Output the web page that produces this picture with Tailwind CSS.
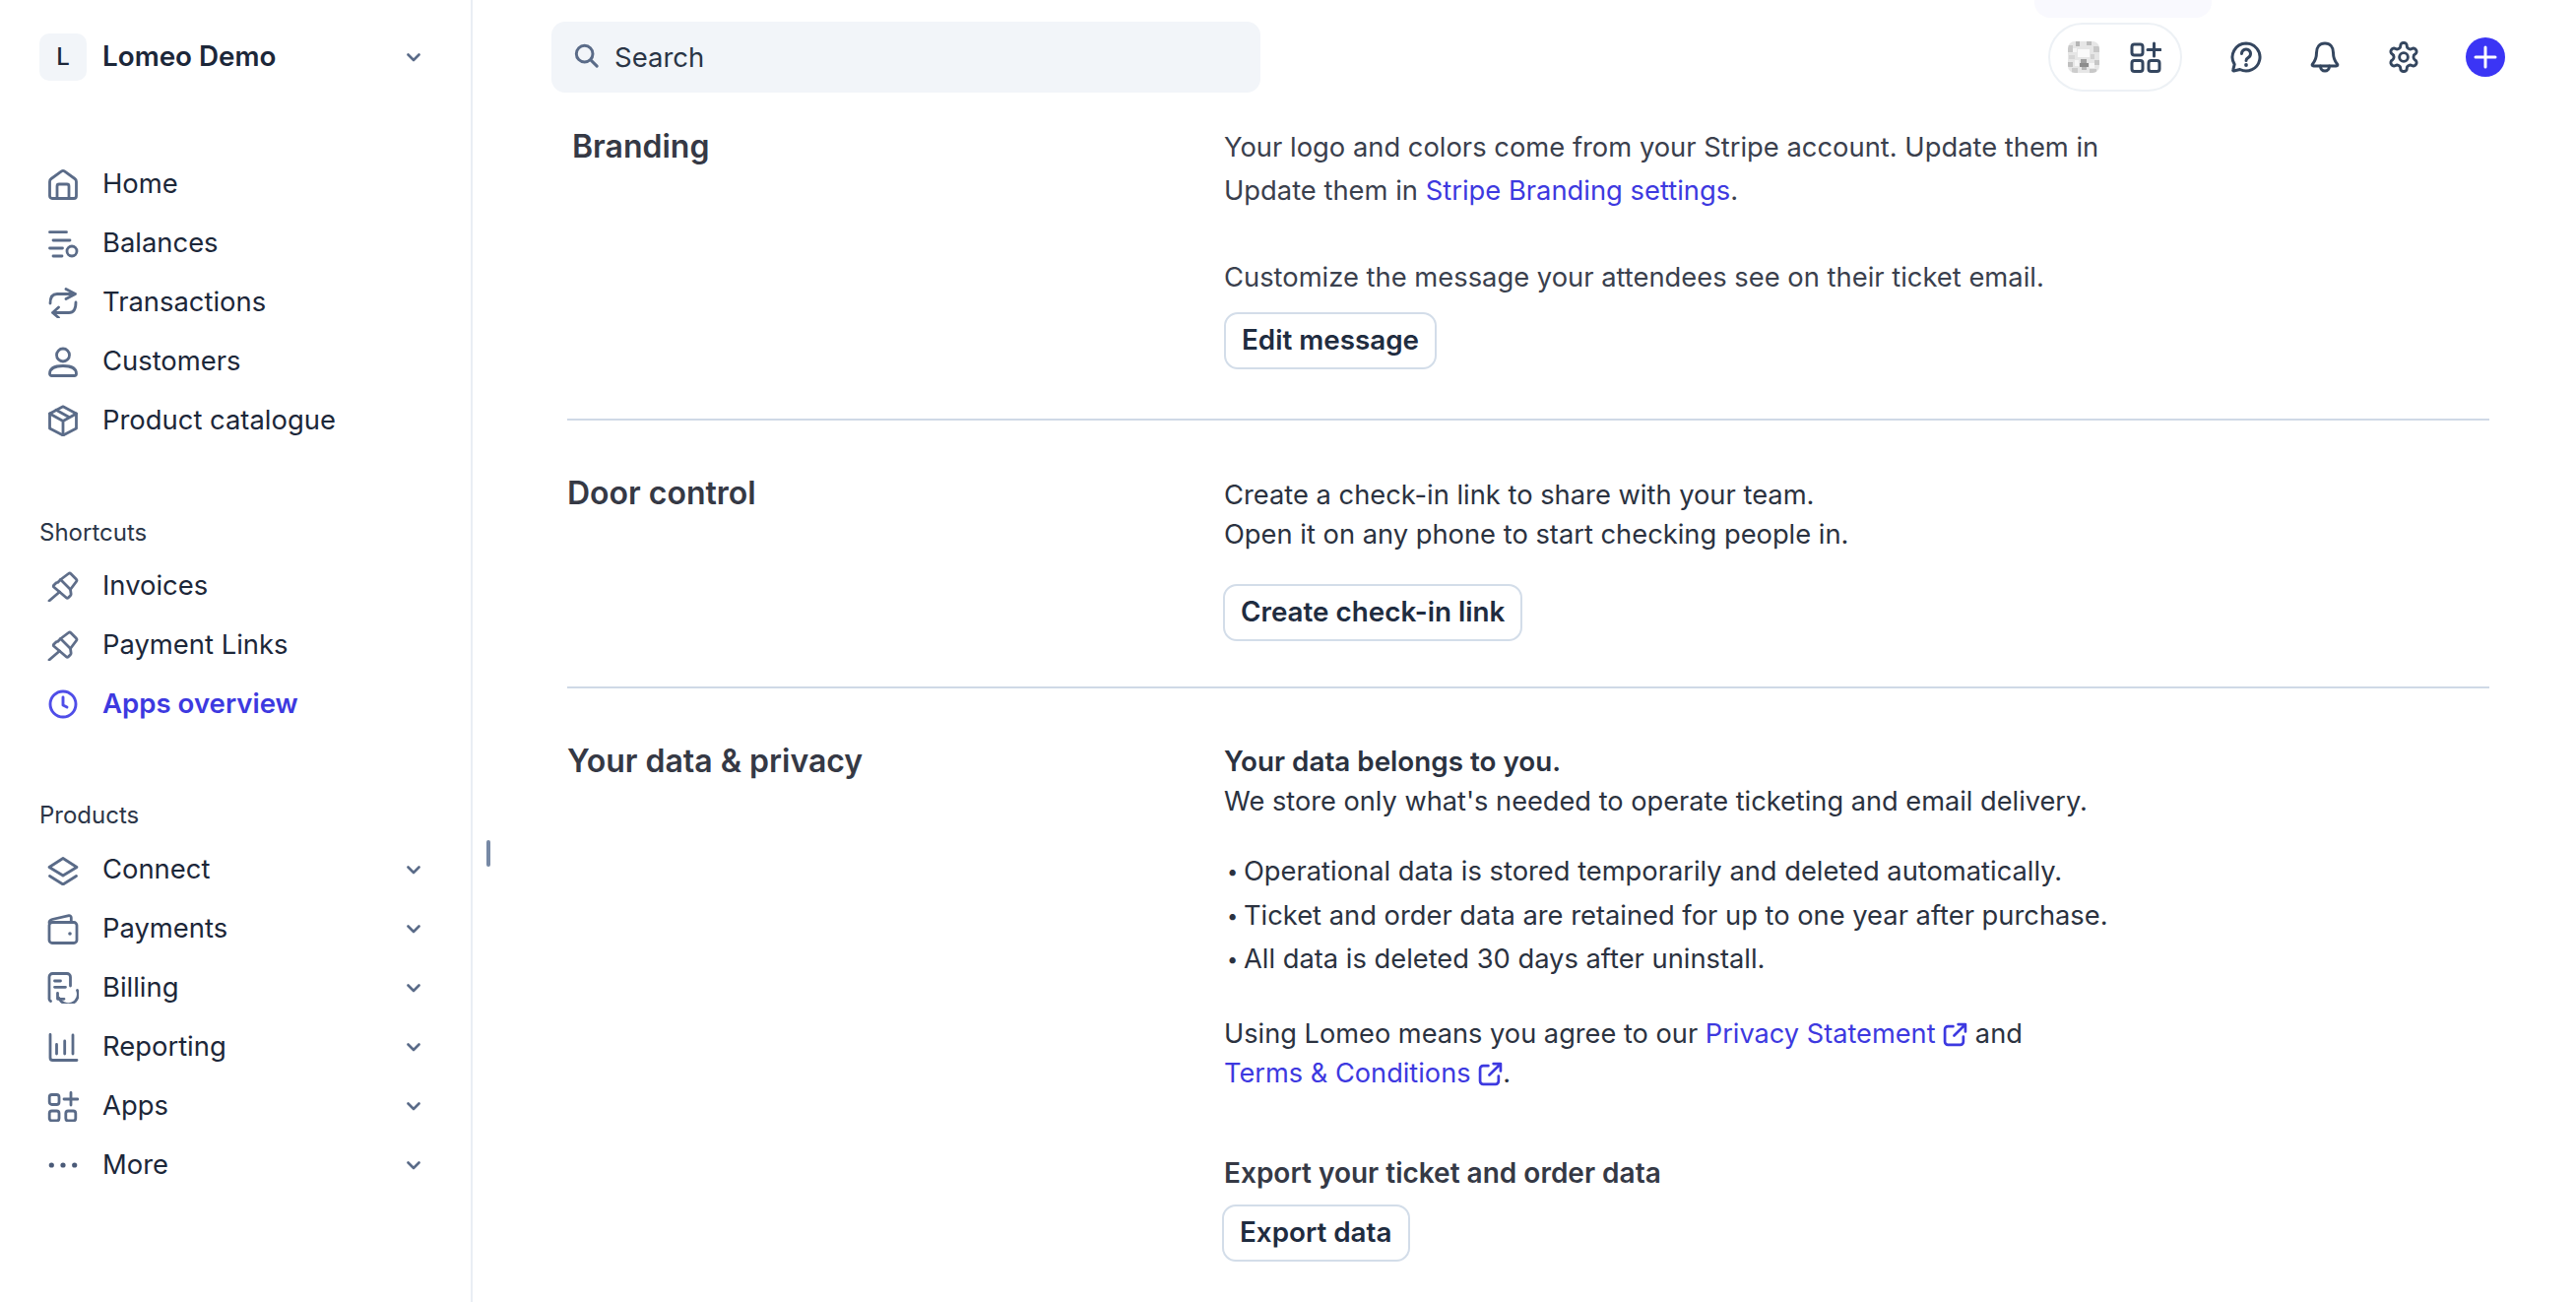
<!DOCTYPE html>
<html lang="en">
<head>
    <meta charset="UTF-8">
    <meta name="viewport" content="width=device-width, initial-scale=1.0">
    <title>Lomeo Demo - Apps overview</title>
    <script src="https://cdn.jsdelivr.net/npm/@tailwindcss/browser@4"></script>
</head>
<body class="bg-white font-['Inter',sans-serif] text-[#1c2739] h-screen overflow-hidden">

<div class="flex h-screen relative">

    <!-- Sidebar -->
    <aside class="w-[480px] shrink-0 border-r-2 border-[#e9eef4] pt-[34px] text-[27.4px]">
        <div class="flex items-center pl-[40px] pr-[51px] h-[48px]">
            <div class="w-[48px] h-[48px] rounded-[10px] bg-[#f2f5f9] flex items-center justify-center text-[24px] font-medium">L</div>
            <span class="ml-[16px] text-[27.8px] font-semibold flex-1">Lomeo Demo</span>
            <svg class="w-[14px] h-[9px] text-[#5a6b88]" viewBox="0 0 14 9" fill="none" stroke="currentColor" stroke-width="2.6" stroke-linecap="round" stroke-linejoin="round"><path d="M1.500 1.500 7 7l5.500-5.500"/></svg>
        </div>

        <!-- Main nav -->
        <nav class="mt-[75px] text-[#5a6b88]">
            <a class="flex items-center h-[60px] pl-[48px] gap-[24px]">
                <svg class="w-[32px] h-[32px]" viewBox="0 0 32 32" fill="none" stroke="currentColor" stroke-width="2.8" stroke-linejoin="round" stroke-linecap="round"><path d="M2.500 13.500c0-1.200.5-2.300 1.500-3L14.500 2.900a2.500 2.500 0 0 1 3 0L28 10.500c1 .7 1.500 1.800 1.500 3V28a2.500 2.500 0 0 1-2.500 2.500H5A2.500 2.500 0 0 1 2.500 28Z"/><path d="M10 30V18a2 2 0 0 1 2-2h8a2 2 0 0 1 2 2v12"/></svg>
                <span class="text-[#1c2739]">Home</span>
            </a>
            <a class="flex items-center h-[60px] pl-[48px] gap-[24px]">
                <svg class="w-[32px] h-[32px]" viewBox="0 0 32 32" fill="none" stroke="currentColor" stroke-width="2.8" stroke-linecap="round"><path d="M2.500 4.700h17M6 13h17M2.500 21h13M6 29h9"/><circle cx="25" cy="24" r="5"/></svg>
                <span class="text-[#1c2739]">Balances</span>
            </a>
            <a class="flex items-center h-[60px] pl-[48px] gap-[24px]">
                <svg class="w-[32px] h-[32px]" viewBox="0 0 32 32" fill="none" stroke="currentColor" stroke-width="2.8" stroke-linecap="round" stroke-linejoin="round"><path d="M3 17c0-6 2-9.500 7-9.500h18.500M19 2.500l9.500 5-9.500 5M29 16c0 7-2 10.500-7 10.500H5.500M11.500 21l-6 5.500 6 5"/></svg>
                <span class="text-[#1c2739]">Transactions</span>
            </a>
            <a class="flex items-center h-[60px] pl-[48px] gap-[24px]">
                <svg class="w-[32px] h-[32px]" viewBox="0 0 32 32" fill="none" stroke="currentColor" stroke-width="2.8" stroke-linejoin="round"><circle cx="16" cy="9.500" r="6.500"/><path d="M2.500 28.500C2.500 23 8 20.500 16 20.500S29.500 23 29.500 28.500a2 2 0 0 1-2 2h-23a2 2 0 0 1-2-2Z"/></svg>
                <span class="text-[#1c2739]">Customers</span>
            </a>
            <a class="flex items-center h-[60px] pl-[48px] gap-[24px]">
                <svg class="w-[32px] h-[32px]" viewBox="0 0 32 32" fill="none" stroke="currentColor" stroke-width="2.8" stroke-linejoin="round" stroke-linecap="round"><path d="M16 1.800 29.500 9v15L16 31 2.500 24V9Z"/><path d="M2.500 9 16 16.500 29.500 9M16 16.500V31M9 5.200l13.500 7.600"/></svg>
                <span class="text-[#1c2739]">Product catalogue</span>
            </a>
        </nav>

        <!-- Shortcuts -->
        <div class="mt-[66px] pl-[40px] text-[24px] leading-[36px] text-[#2b3648]">Shortcuts</div>
        <nav class="mt-[6px] text-[#5f6e8a]">
            <a class="flex items-center h-[60px] pl-[48px] gap-[24px]">
                <svg class="w-[32px] h-[32px]" viewBox="0 0 32 32" fill="none" stroke="currentColor" stroke-width="2.8" stroke-linejoin="round" stroke-linecap="round"><path d="M13.500 9.500 21.500 3.500a2 2 0 0 1 2.600.2l5.200 5.200a2 2 0 0 1 .2 2.600l-6 8 .6 4.500a2 2 0 0 1-.6 1.700l-2.300 2.300a1.200 1.200 0 0 1-1.700 0L6.600 17a1.200 1.200 0 0 1 0-1.700l2.300-2.300a2 2 0 0 1 1.700-.6Z"/><path d="M13.500 9.500 23.500 19.500M12.500 22 2 31"/></svg>
                <span class="text-[#1c2739]">Invoices</span>
            </a>
            <a class="flex items-center h-[60px] pl-[48px] gap-[24px]">
                <svg class="w-[32px] h-[32px]" viewBox="0 0 32 32" fill="none" stroke="currentColor" stroke-width="2.8" stroke-linejoin="round" stroke-linecap="round"><path d="M13.500 9.500 21.500 3.500a2 2 0 0 1 2.600.2l5.200 5.200a2 2 0 0 1 .2 2.600l-6 8 .6 4.500a2 2 0 0 1-.6 1.700l-2.300 2.300a1.200 1.200 0 0 1-1.700 0L6.600 17a1.200 1.200 0 0 1 0-1.700l2.300-2.300a2 2 0 0 1 1.700-.6Z"/><path d="M13.500 9.500 23.500 19.500M12.500 22 2 31"/></svg>
                <span class="text-[#1c2739]">Payment Links</span>
            </a>
            <a class="flex items-center h-[60px] pl-[48px] gap-[24px]">
                <svg class="w-[32px] h-[32px] text-[#4f4de8]" viewBox="0 0 32 32" fill="none" stroke="currentColor" stroke-width="2.9" stroke-linecap="round" stroke-linejoin="round"><circle cx="16" cy="16" r="13"/><path d="M16 9v8l4 2"/></svg>
                <span class="text-[#3d39e0] text-[27.6px] font-semibold">Apps overview</span>
            </a>
        </nav>

        <!-- Products -->
        <div class="mt-[65px] pl-[40px] text-[24px] leading-[36px] text-[#2b3648]">Products</div>
        <nav class="mt-[7px] text-[#5a6b88]">
            <a class="flex items-center h-[60px] pl-[48px] pr-[51px] gap-[24px]">
                <svg class="w-[32px] h-[32px]" viewBox="0 0 32 32" fill="none" stroke="currentColor" stroke-width="2.8" stroke-linejoin="round" stroke-linecap="round"><path d="M16 4.500 30 13.500 16 22 2 13.500Z"/><path d="M2.500 22.500 16 31l13.500-8.500"/></svg>
                <span class="text-[#1c2739] flex-1">Connect</span>
                <svg class="w-[14px] h-[9px]" viewBox="0 0 14 9" fill="none" stroke="currentColor" stroke-width="2.6" stroke-linecap="round" stroke-linejoin="round"><path d="M1.500 1.500 7 7l5.500-5.500"/></svg>
            </a>
            <a class="flex items-center h-[60px] pl-[48px] pr-[51px] gap-[24px]">
                <svg class="w-[32px] h-[32px]" viewBox="0 0 32 32" fill="none" stroke="currentColor" stroke-width="2.8" stroke-linejoin="round" stroke-linecap="round"><rect x="2" y="9.500" width="28" height="21" rx="3"/><path d="M2 10c0-2 1-3 3-3.500L22 2.700c1-.2 2.300.5 2.300 2v4.800"/><circle cx="23" cy="21" r="1.800" fill="currentColor" stroke="none"/></svg>
                <span class="text-[#1c2739] flex-1">Payments</span>
                <svg class="w-[14px] h-[9px]" viewBox="0 0 14 9" fill="none" stroke="currentColor" stroke-width="2.6" stroke-linecap="round" stroke-linejoin="round"><path d="M1.500 1.500 7 7l5.500-5.500"/></svg>
            </a>
            <a class="flex items-center h-[60px] pl-[48px] pr-[51px] gap-[24px]">
                <svg class="w-[32px] h-[32px]" viewBox="0 0 32 32" fill="none" stroke="currentColor" stroke-width="2.8" stroke-linejoin="round" stroke-linecap="round"><path d="M3.500 29.500C2.500 29 2 28.500 2 27.500V5a3.500 3.500 0 0 1 3.500-3.500H20A3.500 3.500 0 0 1 23.500 5v9"/><path d="M7.500 9h6M7.500 15.300h11"/><path d="M30.500 18.500a9.700 9.700 0 0 1-18.500 8"/><path d="M10.500 21.300v6h6.500"/></svg>
                <span class="text-[#1c2739] flex-1">Billing</span>
                <svg class="w-[14px] h-[9px]" viewBox="0 0 14 9" fill="none" stroke="currentColor" stroke-width="2.6" stroke-linecap="round" stroke-linejoin="round"><path d="M1.500 1.500 7 7l5.500-5.500"/></svg>
            </a>
            <a class="flex items-center h-[60px] pl-[48px] pr-[51px] gap-[24px]">
                <svg class="w-[32px] h-[32px]" viewBox="0 0 32 32" fill="none" stroke="currentColor" stroke-width="2.8" stroke-linejoin="round" stroke-linecap="round"><path d="M3 3.500V27a2.500 2.500 0 0 0 2.500 2.500H30"/><path d="M9.500 13.500V23M17.700 10v13M26 4v19"/></svg>
                <span class="text-[#1c2739] flex-1">Reporting</span>
                <svg class="w-[14px] h-[9px]" viewBox="0 0 14 9" fill="none" stroke="currentColor" stroke-width="2.6" stroke-linecap="round" stroke-linejoin="round"><path d="M1.500 1.500 7 7l5.500-5.500"/></svg>
            </a>
            <a class="flex items-center h-[60px] pl-[48px] pr-[51px] gap-[24px]">
                <svg class="w-[32px] h-[32px]" viewBox="0 0 32 32" fill="none" stroke="currentColor" stroke-width="2.8" stroke-linejoin="round" stroke-linecap="round"><rect x="2.200" y="4.500" width="9.800" height="10" rx="2.500"/><rect x="2.200" y="21" width="9.800" height="10" rx="2.500"/><rect x="18.800" y="21" width="10" height="10" rx="2.500"/><path d="M17 9h14M24 2.500v12.500"/></svg>
                <span class="text-[#1c2739] flex-1">Apps</span>
                <svg class="w-[14px] h-[9px]" viewBox="0 0 14 9" fill="none" stroke="currentColor" stroke-width="2.6" stroke-linecap="round" stroke-linejoin="round"><path d="M1.500 1.500 7 7l5.500-5.500"/></svg>
            </a>
            <a class="flex items-center h-[60px] pl-[48px] pr-[51px] gap-[24px]">
                <svg class="w-[32px] h-[32px] text-[#4a5a78]" viewBox="0 0 32 32" fill="currentColor"><circle cx="4.300" cy="16" r="2.600"/><circle cx="16" cy="16" r="2.600"/><circle cx="27.700" cy="16" r="2.600"/></svg>
                <span class="text-[#1c2739] flex-1">More</span>
                <svg class="w-[14px] h-[9px]" viewBox="0 0 14 9" fill="none" stroke="currentColor" stroke-width="2.6" stroke-linecap="round" stroke-linejoin="round"><path d="M1.500 1.500 7 7l5.500-5.500"/></svg>
            </a>
        </nav>
    </aside>

    <!-- Sidebar resize handle -->
    <div class="absolute left-[494px] top-[853px] w-[4px] h-[27px] rounded-full bg-[#7789a5]"></div>
    <!-- Faint shape at the top edge -->
    <div class="absolute left-[2066px] top-0 w-[180px] h-[18px] rounded-b-2xl bg-[#f9f9fe]"></div>

    <main class="flex-1 min-w-0 pl-[96px] pr-[88px]">
        <!-- Top bar -->
        <header class="flex items-center -ml-[16px] pt-[22px] h-[94px]">
            <div class="w-[720px] h-[72px] rounded-[14px] bg-[#f2f5f9] flex items-center pl-[23px] gap-[16px]">
                <svg class="w-[25px] h-[25px] -mt-[3px] text-[#5a6b88]" viewBox="0 0 27 27" fill="none" stroke="currentColor" stroke-width="3.200" stroke-linecap="round"><circle cx="11.500" cy="11.500" r="9"/><path d="M18.500 18.500 25 25"/></svg>
                <span class="mt-[2px] text-[27.5px] text-[#2a3546]">Search</span>
            </div>
            <div class="ml-auto flex items-center -mr-[16px] text-[#34465f]">
                <div class="w-[136px] h-[70px] rounded-full border-2 border-[#edf1f5] flex items-center pl-[18px] gap-[31px]">
                    <div class="w-[32px] h-[32px] rounded-[7px] overflow-hidden">
                        <svg class="w-[32px] h-[32px] block blur-[0.5px]" viewBox="0 0 32 32">
                            <rect width="32" height="32" fill="#e6e6e6"/>
                            <rect x="0" y="4" width="5" height="7" fill="#cacaca"/><rect x="8" y="0" width="4" height="5" fill="#b5b5b5"/><rect x="19" y="0" width="5" height="4" fill="#bdbdbd"/><rect x="26" y="5" width="6" height="6" fill="#c8c8c8"/><rect x="5" y="7" width="4" height="4" fill="#f5f5f5"/><rect x="10" y="8" width="12" height="8" fill="#fafafa"/><rect x="23" y="13" width="4" height="5" fill="#d0d0d0"/><rect x="1" y="14" width="6" height="4" fill="#d6d6d6"/><rect x="0" y="21" width="5" height="5" fill="#c0c0c0"/><rect x="7" y="19" width="4" height="6" fill="#f6f6f6"/><rect x="13" y="18" width="6" height="4" fill="#a0a0a0"/><rect x="12" y="22" width="9" height="4" fill="#8c8c8c"/><rect x="14" y="26" width="5" height="3" fill="#b8b8b8"/><rect x="22" y="22" width="5" height="5" fill="#f6f6f6"/><rect x="27" y="19" width="5" height="5" fill="#c6c6c6"/><rect x="4" y="27" width="6" height="5" fill="#cccccc"/><rect x="22" y="28" width="7" height="4" fill="#c8c8c8"/>
                        </svg>
                    </div>
                    <svg class="w-[32px] h-[32px]" viewBox="0 0 32 32" fill="none" stroke="currentColor" stroke-width="3" stroke-linecap="round" stroke-linejoin="round"><rect x="2" y="3" width="11" height="11" rx="2.500"/><rect x="2" y="19.500" width="11" height="11" rx="2.500"/><rect x="19" y="19.500" width="11" height="11" rx="2.500"/><path d="M18 8.500h13M24.500 2v13"/></svg>
                </div>
                <svg class="w-[32px] h-[32px] ml-[49px]" viewBox="0 0 32 32" fill="none" stroke="currentColor" stroke-width="3" stroke-linecap="round" stroke-linejoin="round"><path d="M16 2a14 14 0 1 1-6.300 26.500L3.500 30a.7.7 0 0 1-.8-.9l1.500-5.700A14 14 0 0 1 16 2Z"/><path d="M11.500 12.500a4.500 4.500 0 1 1 6.800 3.900c-1.400.8-2.300 1.600-2.300 3"/><circle cx="16" cy="24" r="1.900" fill="currentColor" stroke="none"/></svg>
                <svg class="w-[32px] h-[32px] ml-[48px]" viewBox="0 0 32 32" fill="none" stroke="currentColor" stroke-width="3" stroke-linecap="round" stroke-linejoin="round"><path d="M16 2c-5.500 0-8.500 4-8.500 9.500 0 5-1 8-4 11.500-.8 1-.3 2 1 2h23c1.300 0 1.800-1 1-2-3-3.500-4-6.500-4-11.500C24.500 6 21.500 2 16 2Z"/><path d="M11.500 25c0 3 2 5 4.500 5s4.500-2 4.500-5"/></svg>
                <svg class="w-[32px] h-[32px] ml-[48px]" viewBox="1 1 22 22" fill="none" stroke="currentColor" stroke-width="2" stroke-linecap="round" stroke-linejoin="round"><path d="M12.220 2h-.44a2 2 0 0 0-2 2v.18a2 2 0 0 1-1 1.730l-.43.25a2 2 0 0 1-2 0l-.15-.08a2 2 0 0 0-2.730.73l-.22.38a2 2 0 0 0 .73 2.730l.15.1a2 2 0 0 1 1 1.720v.51a2 2 0 0 1-1 1.740l-.15.09a2 2 0 0 0-.73 2.730l.22.38a2 2 0 0 0 2.730.73l.15-.08a2 2 0 0 1 2 0l.43.25a2 2 0 0 1 1 1.730V20a2 2 0 0 0 2 2h.44a2 2 0 0 0 2-2v-.18a2 2 0 0 1 1-1.730l.43-.25a2 2 0 0 1 2 0l.15.08a2 2 0 0 0 2.730-.73l.22-.39a2 2 0 0 0-.73-2.730l-.15-.08a2 2 0 0 1-1-1.740v-.5a2 2 0 0 1 1-1.740l.15-.09a2 2 0 0 0 .73-2.730l-.22-.38a2 2 0 0 0-2.730-.73l-.15.08a2 2 0 0 1-2 0l-.43-.25a2 2 0 0 1-1-1.730V4a2 2 0 0 0-2-2z"/><circle cx="12" cy="12" r="3"/></svg>
                <div class="w-[40px] h-[40px] ml-[47px] rounded-full bg-[#3b35f5] flex items-center justify-center">
                    <svg class="w-[24px] h-[24px] text-white" viewBox="0 0 24 24" fill="none" stroke="currentColor" stroke-width="3" stroke-linecap="round"><path d="M12 2v20M2 12h20"/></svg>
                </div>
            </div>
        </header>

        <!-- Branding -->
        <section class="grid grid-cols-[667px_1fr] pt-[34px] pb-[50px] border-b-2 border-[#cfd9e6] text-[27.35px] text-[#3a404d]">
            <h3 class="mt-[3px] ml-[5px] text-[32px] leading-[36px] font-semibold text-[#353945]">Branding</h3>
            <div>
                <p class="leading-[44px]">Your logo and colors come from your Stripe account. Update them in<br>Update them in <a class="text-[#3d39e0]">Stripe Branding settings</a>.</p>
                <p class="mt-[44px] leading-[44px]">Customize the message your attendees see on their ticket email.</p>
                <a class="mt-[13px] inline-flex items-center h-[58px] px-[16px] rounded-[14px] border-2 border-[#d3dde9] text-[27.8px] font-semibold text-[#1f2c40]">Edit message</a>
            </div>
        </section>

        <!-- Door control -->
        <section class="grid grid-cols-[667px_1fr] pt-[56px] pb-[46px] border-b-2 border-[#cfd9e6] text-[27.3px] text-[#2b3240]">
            <h3 class="text-[32px] leading-[36px] font-semibold text-[#353945]">Door control</h3>
            <div>
                <p class="leading-[40px]">Create a check-in link to share with your team.<br>Open it on any phone to start checking people in.</p>
                <a class="mt-[30px] -ml-[1px] inline-flex items-center h-[58px] px-[16px] rounded-[14px] border-2 border-[#d3dde9] text-[27.8px] font-semibold text-[#1f2c40]">Create check-in link</a>
            </div>
        </section>

        <!-- Your data & privacy -->
        <section class="grid grid-cols-[667px_1fr] pt-[54px] text-[27.2px] text-[#2b3240]">
            <h3 class="mt-[2px] text-[32px] leading-[36px] font-semibold text-[#353945]">Your data &amp; privacy</h3>
            <div>
                <p class="leading-[40px]"><span class="text-[27.8px] font-semibold">Your data belongs to you.</span><br>We store only what's needed to operate ticketing and email delivery.</p>
                <ul class="mt-[29px] leading-[44.5px] text-[27.3px]">
                    <li class="flex"><span class="w-[20px] text-[20px] shrink-0 pl-[3px]">•</span>Operational data is stored temporarily and deleted automatically.</li>
                    <li class="flex"><span class="w-[20px] text-[20px] shrink-0 pl-[3px]">•</span>Ticket and order data are retained for up to one year after purchase.</li>
                    <li class="flex"><span class="w-[20px] text-[20px] shrink-0 pl-[3px]">•</span>All data is deleted 30 days after uninstall.</li>
                </ul>
                <p class="mt-[33px] leading-[40px]">Using Lomeo means you agree to our <a class="text-[#3d39e0]">Privacy Statement <svg class="inline w-[25px] h-[25px] align-[-4px]" viewBox="0 0 24 24" fill="none" stroke="currentColor" stroke-width="2.6" stroke-linecap="round" stroke-linejoin="round"><path d="M10 4H5a3 3 0 0 0-3 3v12a3 3 0 0 0 3 3h12a3 3 0 0 0 3-3v-5M15 2h7v7M22 2 11 13"/></svg></a> and<br><a class="text-[#3d39e0]">Terms &amp; Conditions <svg class="inline w-[25px] h-[25px] align-[-4px]" viewBox="0 0 24 24" fill="none" stroke="currentColor" stroke-width="2.6" stroke-linecap="round" stroke-linejoin="round"><path d="M10 4H5a3 3 0 0 0-3 3v12a3 3 0 0 0 3 3h12a3 3 0 0 0 3-3v-5M15 2h7v7M22 2 11 13"/></svg></a>.</p>
                <p class="mt-[61px] leading-[40px] text-[28px] font-semibold text-[#353945]">Export your ticket and order data</p>
                <a class="mt-[12px] -ml-[2px] inline-flex items-center h-[58px] px-[16px] rounded-[14px] border-2 border-[#d3dde9] text-[27.8px] font-semibold text-[#1f2c40]">Export data</a>
            </div>
        </section>
    </main>
</div>

</body>
</html>
